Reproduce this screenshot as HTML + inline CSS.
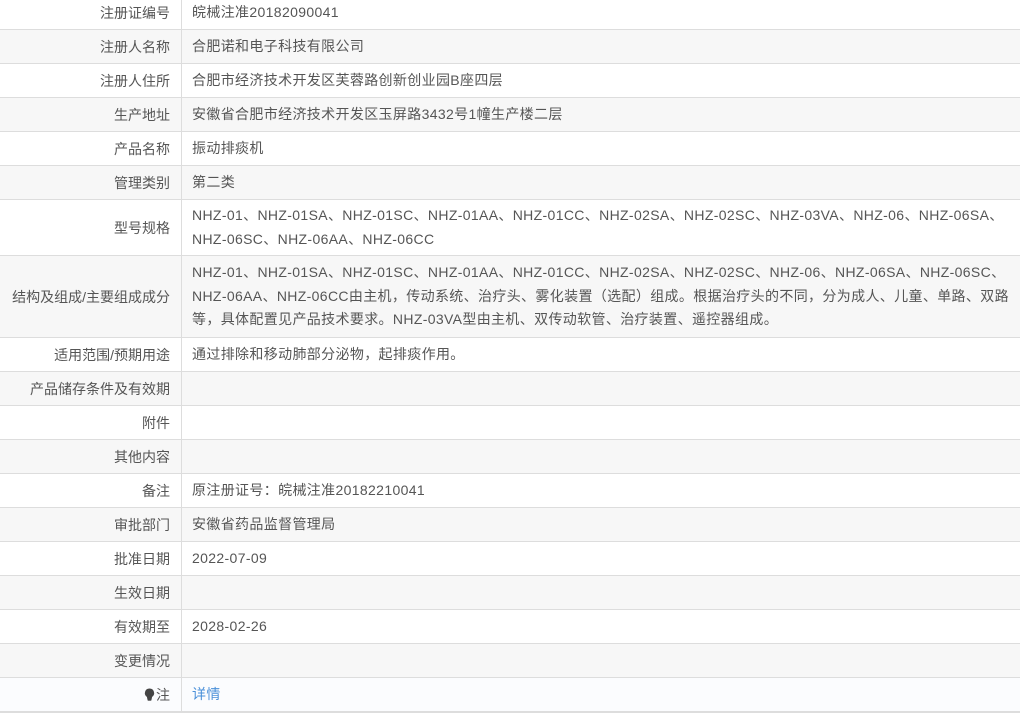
<!DOCTYPE html>
<html><head><meta charset="utf-8"><style>
body{margin:0;width:1020px;height:722px;overflow:hidden;background:#fff;font-family:"Liberation Sans","Noto Sans CJK SC",sans-serif;font-size:14px;letter-spacing:0.35px;color:#555;}
.wrap{position:absolute;top:-4px;left:0;width:1020px;}
.r{display:flex;border-bottom:1px solid #ddd;box-sizing:border-box;}
.r:nth-child(even){background:#f7f7f7;}
.l{width:182px;flex:none;border-right:1px solid #ddd;box-sizing:border-box;text-align:right;padding-right:11px;display:flex;align-items:center;justify-content:flex-end;letter-spacing:0;}
.v{padding-left:10px;display:flex;align-items:center;line-height:23.5px;white-space:nowrap;}
a{color:#4a90d9;text-decoration:none;}
</style></head><body><div class="wrap">
<div class="r" style="height:34px"><div class="l">注册证编号</div><div class="v">皖械注准20182090041</div></div>
<div class="r" style="height:34px"><div class="l">注册人名称</div><div class="v">合肥诺和电子科技有限公司</div></div>
<div class="r" style="height:34px"><div class="l">注册人住所</div><div class="v">合肥市经济技术开发区芙蓉路创新创业园B座四层</div></div>
<div class="r" style="height:34px"><div class="l">生产地址</div><div class="v">安徽省合肥市经济技术开发区玉屏路3432号1幢生产楼二层</div></div>
<div class="r" style="height:34px"><div class="l">产品名称</div><div class="v">振动排痰机</div></div>
<div class="r" style="height:34px"><div class="l">管理类别</div><div class="v">第二类</div></div>
<div class="r" style="height:56px"><div class="l">型号规格</div><div class="v">NHZ-01、NHZ-01SA、NHZ-01SC、NHZ-01AA、NHZ-01CC、NHZ-02SA、NHZ-02SC、NHZ-03VA、NHZ-06、NHZ-06SA、<br>NHZ-06SC、NHZ-06AA、NHZ-06CC</div></div>
<div class="r" style="height:82px"><div class="l">结构及组成/主要组成成分</div><div class="v">NHZ-01、NHZ-01SA、NHZ-01SC、NHZ-01AA、NHZ-01CC、NHZ-02SA、NHZ-02SC、NHZ-06、NHZ-06SA、NHZ-06SC、<br>NHZ-06AA、NHZ-06CC由主机，传动系统、治疗头、雾化装置（选配）组成。根据治疗头的不同，分为成人、儿童、单路、双路<br>等，具体配置见产品技术要求。NHZ-03VA型由主机、双传动软管、治疗装置、遥控器组成。</div></div>
<div class="r" style="height:34px"><div class="l">适用范围/预期用途</div><div class="v">通过排除和移动肺部分泌物，起排痰作用。</div></div>
<div class="r" style="height:34px"><div class="l">产品储存条件及有效期</div><div class="v"></div></div>
<div class="r" style="height:34px"><div class="l">附件</div><div class="v"></div></div>
<div class="r" style="height:34px"><div class="l">其他内容</div><div class="v"></div></div>
<div class="r" style="height:34px"><div class="l">备注</div><div class="v">原注册证号：皖械注准20182210041</div></div>
<div class="r" style="height:34px"><div class="l">审批部门</div><div class="v">安徽省药品监督管理局</div></div>
<div class="r" style="height:34px"><div class="l">批准日期</div><div class="v">2022-07-09</div></div>
<div class="r" style="height:34px"><div class="l">生效日期</div><div class="v"></div></div>
<div class="r" style="height:34px"><div class="l">有效期至</div><div class="v">2028-02-26</div></div>
<div class="r" style="height:34px"><div class="l">变更情况</div><div class="v"></div></div>
<div class="r" style="height:35px;background:#fbfcfe;border-bottom:2px solid #ddd"><div class="l"><svg width="11" height="13" viewBox="0 0 11 13" style="margin-right:1px"><path d="M5.5 0.5a4.6 4.6 0 0 0-2.6 8.4l0.6 3h4l0.6-3A4.6 4.6 0 0 0 5.5 0.5z" fill="#444"/><rect x="3.7" y="11.3" width="3.6" height="1.4" fill="#444"/></svg>注</div><div class="v"><a>详情</a></div></div>
</div></body></html>
